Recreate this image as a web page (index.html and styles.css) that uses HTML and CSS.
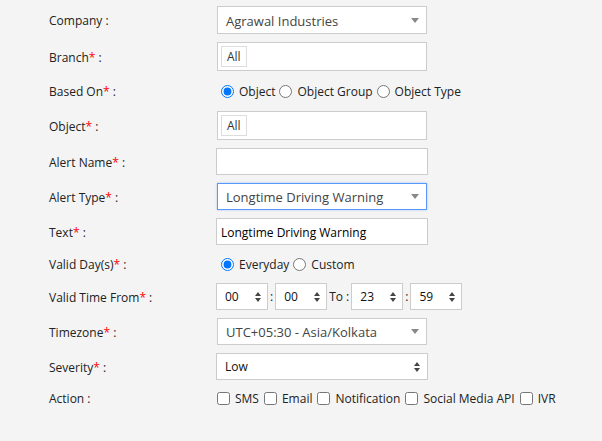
FILE: index.html
```html
<!DOCTYPE html>
<html lang="en">
<head>
    <meta charset="UTF-8">
    <title>Alert Settings</title>
    <link rel="stylesheet" href="styles.css">
</head>
<body>
    <form class="alert-form" onsubmit="return false;">
        <div class="row h28">
            <label class="label">Company :</label>
            <div class="select2">
                <span class="select2-text">Agrawal Industries</span>
                <span class="caret"></span>
            </div>
        </div>
        <div class="row h29">
            <label class="label">Branch<span class="req">*</span> :</label>
            <div class="multi"><span class="tag">All</span></div>
        </div>
        <div class="row h24">
            <label class="label">Based On<span class="req">*</span> :</label>
            <div class="options">
                <label><input type="radio" name="based" checked>Object</label>
                <label><input type="radio" name="based">Object Group</label>
                <label><input type="radio" name="based">Object Type</label>
            </div>
        </div>
        <div class="row h29">
            <label class="label">Object<span class="req">*</span> :</label>
            <div class="multi"><span class="tag">All</span></div>
        </div>
        <div class="row h27">
            <label class="label">Alert Name<span class="req">*</span> :</label>
            <input type="text" class="text-input">
        </div>
        <div class="row h27">
            <label class="label">Alert Type<span class="req">*</span> :</label>
            <div class="select2 focused">
                <span class="select2-text">Longtime Driving Warning</span>
                <span class="caret"></span>
            </div>
        </div>
        <div class="row h27">
            <label class="label">Text<span class="req">*</span> :</label>
            <input type="text" class="text-input" value="Longtime Driving Warning">
        </div>
        <div class="row h22">
            <label class="label">Valid Day(s)<span class="req">*</span> :</label>
            <div class="options">
                <label><input type="radio" name="days" checked>Everyday</label>
                <label><input type="radio" name="days">Custom</label>
            </div>
        </div>
        <div class="row h27">
            <label class="label">Valid Time From<span class="req">*</span> :</label>
            <div class="time-group">
                <div class="time-box"><span>00</span><span class="spin"></span></div>
                <span class="sep">:</span>
                <div class="time-box"><span>00</span><span class="spin"></span></div>
                <span class="sep">To :</span>
                <div class="time-box"><span>23</span><span class="spin"></span></div>
                <span class="sep">:</span>
                <div class="time-box"><span>59</span><span class="spin"></span></div>
            </div>
        </div>
        <div class="row h27">
            <label class="label">Timezone<span class="req">*</span> :</label>
            <div class="select2">
                <span class="select2-text">UTC+05:30 - Asia/Kolkata</span>
                <span class="caret"></span>
            </div>
        </div>
        <div class="row h27">
            <label class="label">Severity<span class="req">*</span> :</label>
            <div class="plain-select"><span>Low</span><span class="spin"></span></div>
        </div>
        <div class="row h20">
            <label class="label">Action :</label>
            <div class="checks">
                <label><input type="checkbox">SMS</label>
                <label><input type="checkbox">Email</label>
                <label><input type="checkbox">Notification</label>
                <label><input type="checkbox">Social Media API</label>
                <label><input type="checkbox">IVR</label>
            </div>
        </div>
    </form>
</body>
</html>
```
FILE: styles.css
```css
body {
    margin: 0;
    padding: 6px 0 0 49px;
    background-color: #f4f4f4;
    font-family: "Open Sans", Arial, sans-serif;
    font-size: 12px;
    color: #222;
}
.alert-form {
    display: flex;
    flex-direction: column;
    gap: 8px;
}
.row {
    display: flex;
    align-items: center;
}
.h20 { height: 20px; }
.h22 { height: 22px; }
.h24 { height: 24px; }
.h27 { height: 27px; }
.h28 { height: 28px; }
.h29 { height: 29px; }
.label {
    width: 167px;
    flex-shrink: 0;
    padding-top: 1px;
}
.req {
    color: #f00;
}
.select2 {
    box-sizing: border-box;
    width: 210px;
    height: 100%;
    margin-left: 1px;
    display: flex;
    align-items: center;
    justify-content: space-between;
    padding: 0 7px 0 8px;
    background: #fff;
    border: 1px solid #ccc;
    color: #444;
    font-size: 13px;
}
.select2-text {
    padding-top: 1px;
}
.select2.focused {
    border-color: #5897fb;
    box-shadow: 0 0 2px rgba(88, 151, 251, 0.5);
}
.caret {
    width: 0;
    height: 0;
    border-left: 4px solid transparent;
    border-right: 4px solid transparent;
    border-top: 5px solid #888;
}
.multi {
    box-sizing: border-box;
    width: 210px;
    height: 100%;
    margin-left: 1px;
    padding: 3px;
    background: #fff;
    border: 1px solid #ccc;
}
.tag {
    display: inline-block;
    box-sizing: border-box;
    height: 21px;
    line-height: 20px;
    padding: 0 5px;
    border: 1px solid #ddd;
    color: #333;
}
.text-input {
    box-sizing: border-box;
    width: 212px;
    height: 100%;
    margin: 0;
    padding: 1px 4px 0;
    border: 1px solid #ccc;
    background: #fff;
    font-family: "Open Sans", Arial, sans-serif;
    font-size: 12px;
    color: #000;
    outline: none;
}
.options,
.checks {
    display: flex;
    align-items: center;
}
.options label,
.checks label {
    display: flex;
    align-items: center;
}
.options input {
    margin: 0 5px 0 5px;
    width: 13px;
    height: 13px;
}
.options label + label input {
    margin-left: 4px;
}
.checks input {
    margin: 0 5px 0 1px;
    width: 13px;
    height: 13px;
}
.checks label + label input {
    margin-left: 5px;
}
.time-group {
    display: flex;
    align-items: center;
    height: 100%;
}
.time-box,
.plain-select {
    box-sizing: border-box;
    height: 100%;
    display: flex;
    align-items: center;
    justify-content: space-between;
    background: #fff;
    border: 1px solid #ccc;
    color: #111;
}
.time-box {
    width: 52px;
    padding: 0 6px 0 8px;
}
.plain-select {
    width: 212px;
    padding: 0 7px 0 8px;
}
.spin {
    display: flex;
    flex-direction: column;
    gap: 2px;
}
.spin::before,
.spin::after {
    content: "";
    width: 0;
    height: 0;
    border-left: 3px solid transparent;
    border-right: 3px solid transparent;
}
.spin::before {
    border-bottom: 4px solid #444;
}
.spin::after {
    border-top: 4px solid #444;
}
.sep {
    padding: 0 2px;
}
```
